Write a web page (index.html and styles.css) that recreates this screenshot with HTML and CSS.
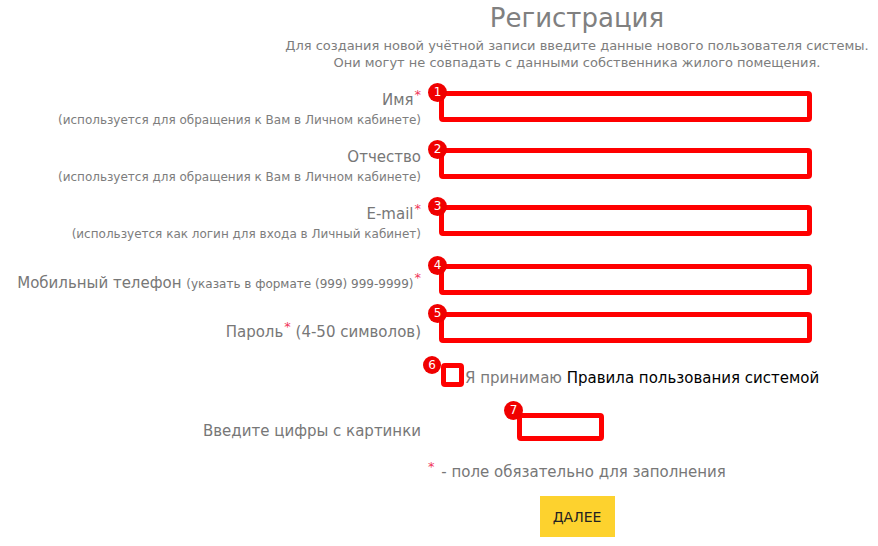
FILE: index.html
```html
<!DOCTYPE html>
<html lang="ru">
<head>
<meta charset="utf-8">
<title>Регистрация</title>
<link rel="stylesheet" href="styles.css">
</head>
<body>
<div class="page">
  <header class="head">
    <h1 class="title">Регистрация</h1>
    <p class="lead">Для создания новой учётной записи введите данные нового пользователя системы.<br>Они могут не совпадать с данными собственника жилого помещения.</p>
  </header>

  <form class="form">
    <div class="row">
      <div class="label">
        <div class="main">Имя<sup class="req">*</sup></div>
        <div class="hint">(используется для обращения к Вам в Личном кабинете)</div>
      </div>
      <div class="field"><span class="badge">1</span><input class="box" type="text"></div>
    </div>

    <div class="row">
      <div class="label">
        <div class="main">Отчество</div>
        <div class="hint">(используется для обращения к Вам в Личном кабинете)</div>
      </div>
      <div class="field"><span class="badge">2</span><input class="box" type="text"></div>
    </div>

    <div class="row row--email">
      <div class="label">
        <div class="main">E-mail<sup class="req">*</sup></div>
        <div class="hint">(используется как логин для входа в Личный кабинет)</div>
      </div>
      <div class="field"><span class="badge">3</span><input class="box" type="text"></div>
    </div>

    <div class="row row--compact">
      <div class="label">
        <div class="main">Мобильный телефон <span class="note">(указать в формате (999) 999-9999)</span><sup class="req">*</sup></div>
      </div>
      <div class="field"><span class="badge">4</span><input class="box" type="text"></div>
    </div>

    <div class="row row--password">
      <div class="label">
        <div class="main">Пароль<sup class="req">*</sup> (4-50 символов)</div>
      </div>
      <div class="field"><span class="badge">5</span><input class="box" type="password"></div>
    </div>

    <div class="row row--agree">
      <div class="label"></div>
      <label class="agree">
        <span class="check-wrap"><span class="badge badge--small">6</span><span class="check"></span></span>
        <span class="agree-text">Я принимаю <a class="rules" href="#">Правила пользования системой</a></span>
      </label>
    </div>

    <div class="row row--captcha">
      <div class="label">
        <div class="main">Введите цифры с картинки</div>
      </div>
      <div class="field field--captcha"><span class="badge">7</span><input class="box box--captcha" type="text"></div>
    </div>

    <div class="row row--note">
      <div class="label"></div>
      <div class="required-note"><sup class="req req--note">*</sup> - поле обязательно для заполнения</div>
    </div>

    <div class="actions">
      <button class="btn" type="button">ДАЛЕЕ</button>
    </div>
  </form>
</div>
</body>
</html>
```
FILE: styles.css
```css
* { box-sizing: border-box; }

html, body {
  margin: 0;
  padding: 0;
  background: #ffffff;
}

body {
  font-family: "DejaVu Sans", Verdana, sans-serif;
  color: #7a7a7a;
  width: 878px;
  height: 546px;
  overflow: hidden;
}

.page {
  padding-top: 1px;
}

.head {
  margin-left: 277px;
  width: 600px;
  text-align: center;
}

.title {
  margin: 0;
  font-size: 26px;
  line-height: 34px;
  font-weight: normal;
  color: #808080;
}

.lead {
  margin: 2px 0 0;
  font-size: 13px;
  line-height: 17px;
  color: #7d7d7d;
}

.form {
  margin: 19px 0 0;
}

.row {
  display: grid;
  grid-template-columns: 421px 1fr;
  column-gap: 18px;
  align-items: center;
  margin-bottom: 17px;
}

.row--email { margin-bottom: 20px; }
.row--compact { margin-bottom: 9px; }
.row--password { margin-bottom: 17px; }
.row--agree { margin-bottom: 25px; }
.row--captcha { margin-bottom: 13px; }
.row--note { margin-bottom: 14px; }

.label {
  text-align: right;
}

.main {
  font-size: 15px;
  line-height: 20px;
  color: #777;
  white-space: nowrap;
}

.note {
  font-size: 12px;
}

.hint {
  font-size: 12px;
  line-height: 20px;
  color: #7d7d7d;
  white-space: nowrap;
}

.req {
  color: #f0365a;
  font-size: 13px;
  line-height: 0;
  vertical-align: 6px;
  margin-left: 1px;
}

.field {
  position: relative;
  width: 373px;
  margin-bottom: 8px;
}

.box {
  display: block;
  width: 373px;
  height: 31px;
  margin: 0;
  border: 5px solid #ff0000;
  border-radius: 4px;
  background: #fff;
  padding: 0 6px;
  outline: none;
}

.badge {
  position: absolute;
  left: -11px;
  top: -8px;
  width: 19px;
  height: 19px;
  border-radius: 50%;
  background: #f00000;
  color: #fff;
  font-size: 12px;
  line-height: 19px;
  text-align: center;
  font-family: "DejaVu Sans", Verdana, sans-serif;
  z-index: 2;
}

.agree {
  display: flex;
  align-items: center;
  font-size: 15px;
  line-height: 20px;
  color: #7a7a7a;
  margin-left: 2px;
}

.check-wrap {
  position: relative;
  display: block;
  width: 23px;
  height: 24px;
  margin-top: -6px;
}

.badge--small {
  left: -18px;
  top: -7px;
  width: 18px;
  height: 18px;
  line-height: 18px;
}

.check {
  display: block;
  width: 23px;
  height: 24px;
  border: 5px solid #ff0000;
  border-radius: 4px;
  background: #fff;
}

.agree-text {
  margin-left: 1px;
  white-space: nowrap;
}

.rules {
  color: #000;
  text-decoration: none;
}

.field--captcha {
  width: 87px;
  margin-left: 78px;
}

.box--captcha {
  width: 87px;
  height: 28px;
}

.field--captcha .badge {
  left: -13px;
  top: -12px;
}

.required-note {
  font-size: 15px;
  line-height: 20px;
  color: #777;
  white-space: nowrap;
}

.req--note {
  margin-left: -11px;
  margin-right: 2px;
}

.actions {
  margin-left: 277px;
  width: 600px;
  text-align: center;
}

.btn {
  width: 75px;
  height: 41px;
  border: none;
  border-radius: 0;
  background: #fdd22e;
  color: #222;
  font-family: "DejaVu Sans", Verdana, sans-serif;
  font-size: 14px;
  padding: 0;
}
```
